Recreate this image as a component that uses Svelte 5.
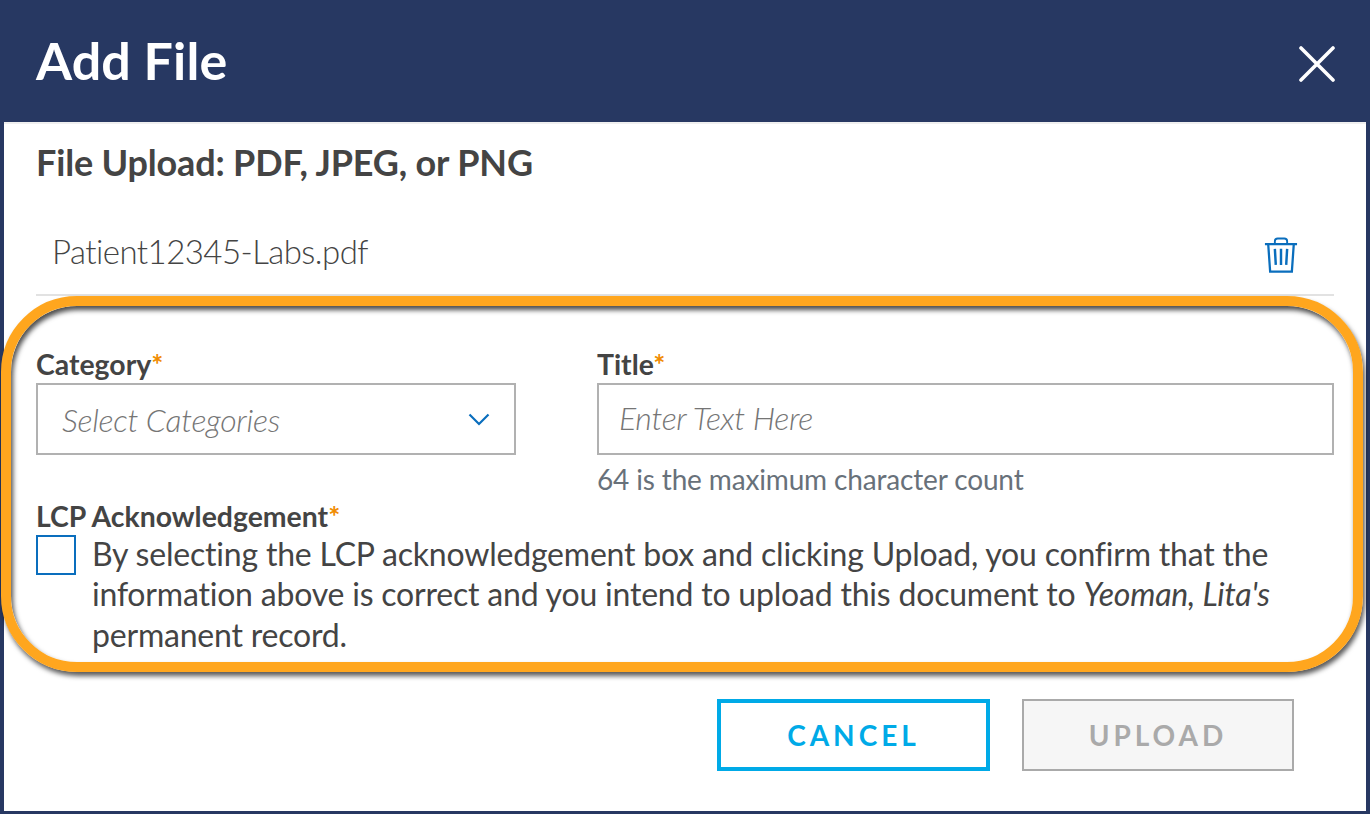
<script>
  const required = '*';
</script>

<div class="dialog">
  <header class="head">
    <h1>Add File</h1>
    <button class="close" aria-label="Close">
      <svg width="36" height="36" viewBox="0 0 36 36"><path d="M2 2 L34 34 M34 2 L2 34" stroke="#fff" stroke-width="3.6" stroke-linecap="round" fill="none"/></svg>
    </button>
  </header>
  <main class="body">
    <h2>File Upload: PDF, JPEG, or PNG</h2>
    <div class="file">
      <span class="name">Patient12345-Labs.pdf</span>
      <svg class="trash" width="34" height="36" viewBox="0 0 36 38" fill="none" stroke="#0a6ebd" stroke-width="2">
        <path d="M1 7.500 H35" stroke-width="2.500"/>
        <path d="M11.500 7 V4.500 Q11.500 1.500 14.500 1.500 H21.500 Q24.500 1.500 24.500 4.500 V7" />
        <path d="M4.500 8 L6.500 36.500 H29.500 L31.500 8" stroke-width="2.400"/>
        <path d="M11.500 12.500 L12.500 29.500 M18 12.500 V29.500 M24.500 12.500 L23.500 29.500" stroke-width="2.600"/>
      </svg>
    </div>
    <div class="fields">
      <div class="field cat">
        <div class="label">Category<span class="req">{required}</span></div>
        <div class="control select">
          <span>Select Categories</span>
          <svg width="22" height="13" viewBox="0 0 22 13" fill="none"><path d="M1.500 1.500 L11 11 L20.500 1.500" stroke="#0a6ebd" stroke-width="2.200"/></svg>
        </div>
      </div>
      <div class="field tit">
        <div class="label">Title<span class="req">{required}</span></div>
        <div class="control input"><span>Enter Text Here</span></div>
        <div class="hint">64 is the maximum character count</div>
      </div>
    </div>
    <div class="ack">
      <div class="label">LCP Acknowledgement<span class="req">{required}</span></div>
      <div class="ackrow">
        <span class="box"></span>
        <p>By selecting the LCP acknowledgement box and clicking Upload, you confirm that the information above is correct and you intend to upload this document to <em>Yeoman, Lita's</em> permanent record.</p>
      </div>
    </div>
    <div class="actions">
      <button class="btn cancel">CANCEL</button>
      <button class="btn upload">UPLOAD</button>
    </div>
  </main>
  <div class="highlight"></div>
</div>

<style>
  :global(body) { margin: 0; background: #fff; }
  .dialog {
    position: relative;
    width: 1370px;
    height: 814px;
    box-sizing: border-box;
    background: #fff;
    border: solid #273862;
    border-width: 0 4px 3px 4px;
    font-family: Lato, sans-serif;
    color: #444;
  }
  .head {
    height: 122px;
    margin: 0 -4px;
    padding: 0 35px 0 36px;
    background: #273862;
    display: flex;
    align-items: center;
    justify-content: space-between;
    box-sizing: content-box;
  }
  h1 { margin: 0 0 3px; color: #fff; font-size: 52px; font-weight: 700; letter-spacing: 0.1px; line-height: 1; }
  .close { background: none; border: 0; padding: 0; display: flex; margin-top: 5px; }
  .body { padding: 0 32px; border-top: 2px solid #efefef; }
  h2 { margin: 0; padding-top: 16px; font-size: 36px; font-weight: 700; line-height: 44px; letter-spacing: -0.17px; color: #444; }
  .file {
    display: flex;
    align-items: center;
    justify-content: space-between;
    height: 112px;
    padding: 18px 36px 0 16px;
    box-sizing: border-box;
    border-bottom: 2px solid #e2e2e2;
  }
  .name { font-size: 33px; font-weight: 300; letter-spacing: -0.55px; color: #444; margin-top: 6px; }
  .trash { margin-top: 13px; }
  .fields { display: flex; gap: 81px; margin-top: 50px; }
  .cat { width: 480px; flex: none; }
  .tit { flex: 1; }
  .label { font-size: 28.400px; font-weight: 700; line-height: 36px; color: #444; }
  .req { color: #f08c00; }
  .control {
    box-sizing: border-box;
    border: 2px solid #b1b1b1;
    display: flex;
    align-items: center;
    justify-content: space-between;
    font-size: 32px;
    font-style: italic;
    font-weight: 300;
    letter-spacing: -0.3px;
    color: #757575;
    height: 72px;
    margin-top: 1px;
  }
  .select { padding: 0 24px; }
  .input { padding: 0 20px 4px; }
  .hint { font-size: 28px; letter-spacing: -0.15px; color: #68717a; line-height: 36px; margin-top: 6px; }
  .ack { margin-top: 1px; }
  .ackrow { display: flex; gap: 16px; }
  .box { width: 40px; height: 40px; flex: none; box-sizing: border-box; border: 2px solid #0a6ebd; margin-top: 1px; }
  p { margin: 0; font-size: 32px; letter-spacing: -0.2px; line-height: 40.300px; color: #444; width: 1200px; }
  .actions { display: flex; justify-content: flex-end; gap: 32px; padding-right: 40px; margin-top: 44px; }
  .btn {
    height: 72px;
    box-sizing: border-box;
    font-family: Lato, sans-serif;
    font-weight: 700;
    font-size: 28px;
    letter-spacing: 4px;
    padding: 0;
  }
  .cancel { width: 273px; background: #fff; border: 4px solid #00aae7; color: #00aae7; }
  .upload { width: 272px; background: #f6f6f6; border: 2px solid #aaa; color: #aaa; }
  .highlight {
    position: absolute;
    left: -3px;
    top: 296px;
    width: 1362px;
    height: 376px;
    box-sizing: border-box;
    border: 10px solid #ffa61e;
    border-radius: 76px;
    box-shadow: 2px 4px 5px rgba(0,0,0,.65), inset 2px 4px 5px rgba(0,0,0,.7);
    pointer-events: none;
  }
</style>
